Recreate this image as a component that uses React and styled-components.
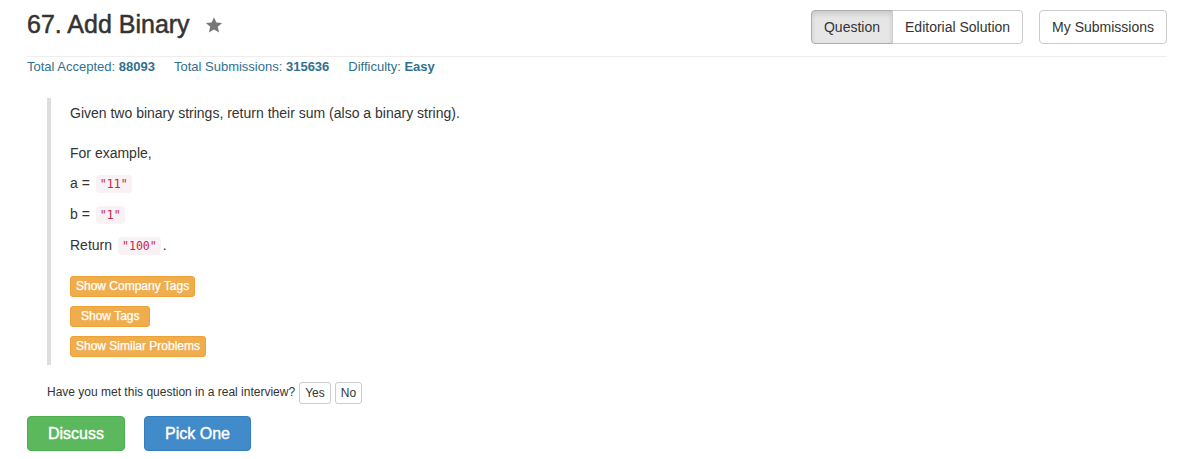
import styled, { createGlobalStyle, css } from "styled-components";

const GlobalStyle = createGlobalStyle`
  body {
    margin: 0;
    background: #fff;
    font-family: "Liberation Sans", Arial, Helvetica, sans-serif;
    color: #333;
    font-size: 14px;
    line-height: 1.42857;
  }
  * { box-sizing: border-box; }
`;

const Page = styled.div`
  width: 1140px;
  margin-left: 27px;
`;

const Header = styled.header`
  display: flex;
  justify-content: space-between;
  align-items: flex-start;
  padding-top: 10px;
  height: 57px;
  border-bottom: 1px solid #eee;
`;

const Title = styled.h3`
  display: flex;
  align-items: center;
  gap: 15px;
  margin: 0;
  font-size: 25px;
  font-weight: 400;
  line-height: 28px;
  color: #333;
  -webkit-text-stroke: 0.5px #333;
`;

const Star = styled.svg`
  width: 18px;
  height: 18px;
  fill: #777;
  margin-top: 1px;
`;

const Toolbar = styled.div`
  display: flex;
  gap: 16px;
`;

const Group = styled.div`
  display: flex;
`;

const NavButton = styled.button`
  font-family: inherit;
  font-size: 14px;
  line-height: 20px;
  padding: 6px 12px;
  color: #333;
  background: ${(p) => (p.$active ? "#e6e6e6" : "#fff")};
  border: 1px solid ${(p) => (p.$active ? "#adadad" : "#ccc")};
  box-shadow: ${(p) => (p.$active ? "inset 0 3px 5px rgba(0,0,0,.125)" : "none")};
  border-radius: 4px;
  cursor: pointer;
  ${(p) =>
    p.$first &&
    css`
      border-top-right-radius: 0;
      border-bottom-right-radius: 0;
    `}
  ${(p) =>
    p.$last &&
    css`
      border-top-left-radius: 0;
      border-bottom-left-radius: 0;
      margin-left: -1px;
    `}
`;

const Stats = styled.div`
  display: flex;
  gap: 19px;
  padding-top: 1px;
  font-size: 13px;
  line-height: 18px;
  color: #31708f;
  b { font-weight: 700; }
`;

const Quote = styled.blockquote`
  margin: 22px 0 0 20px;
  padding: 5px 0 8px 19px;
  border-left: 4px solid #ddd;
`;

const Para = styled.p`
  margin: 0 0 ${(p) => p.$gap || 10}px;
  line-height: 20px;
`;

const Code = styled.code`
  font-family: "DejaVu Sans Mono", "Liberation Mono", monospace;
  font-size: 11.6px;
  padding: 2px 4px;
  color: #c7254e;
  background: #f9f2f4;
  border-radius: 4px;
  margin: 0 2px;
`;

const Tags = styled.div`
  display: flex;
  flex-direction: column;
  align-items: flex-start;
  gap: 9px;
  margin-top: 20px;
`;

const TagButton = styled.button`
  font-family: inherit;
  font-size: 12px;
  line-height: 19px;
  padding: 0 ${(p) => p.$pad || 5}px;
  color: #fff;
  background: #f0ad4e;
  border: 1px solid #eea236;
  border-radius: 3px;
  -webkit-text-stroke: 0.25px #fff;
  cursor: pointer;
`;

const Interview = styled.div`
  display: flex;
  align-items: center;
  gap: 4px;
  margin: 17px 0 0 20px;
  font-size: 12px;
`;

const SmallButton = styled.button`
  font-family: inherit;
  font-size: 12px;
  line-height: 18px;
  padding: 1px 5px;
  color: #333;
  background: #fff;
  border: 1px solid #ccc;
  border-radius: 3px;
  cursor: pointer;
`;

const Actions = styled.div`
  display: flex;
  gap: 19px;
  margin-top: 12px;
`;

const BigButton = styled.button`
  font-family: inherit;
  font-size: 16px;
  height: 35px;
  padding: 0 20px;
  color: #fff;
  background: ${(p) => p.$bg};
  border: 1px solid ${(p) => p.$border};
  border-radius: 4px;
  -webkit-text-stroke: 0.4px #fff;
  cursor: pointer;
`;

export default function App() {
  return (
    <>
      <GlobalStyle />
      <Page>
        <Header>
          <Title>
            67. Add Binary
            <Star viewBox="0 0 24 24">
              <path d="M12 1.5l3.1 7.2 7.8.6-5.9 5.1 1.8 7.6L12 17.9 5.2 22l1.8-7.6-5.9-5.1 7.8-.6z" />
            </Star>
          </Title>
          <Toolbar>
            <Group>
              <NavButton $active $first>Question</NavButton>
              <NavButton $last>Editorial Solution</NavButton>
            </Group>
            <NavButton>My Submissions</NavButton>
          </Toolbar>
        </Header>
        <Stats>
          <span>Total Accepted: <b>88093</b></span>
          <span>Total Submissions: <b>315636</b></span>
          <span>Difficulty: <b>Easy</b></span>
        </Stats>
        <Quote>
          <Para $gap={20}>Given two binary strings, return their sum (also a binary string).</Para>
          <Para>For example,</Para>
          <Para>a = <Code>"11"</Code></Para>
          <Para>b = <Code>"1"</Code></Para>
          <Para $gap={0}>Return <Code>"100"</Code>.</Para>
          <Tags>
            <TagButton>Show Company Tags</TagButton>
            <TagButton $pad={10}>Show Tags</TagButton>
            <TagButton>Show Similar Problems</TagButton>
          </Tags>
        </Quote>
        <Interview>
          <span>Have you met this question in a real interview?</span>
          <SmallButton>Yes</SmallButton>
          <SmallButton>No</SmallButton>
        </Interview>
        <Actions>
          <BigButton $bg="#5cb85c" $border="#4cae4c">Discuss</BigButton>
          <BigButton $bg="#428bca" $border="#357ebd">Pick One</BigButton>
        </Actions>
      </Page>
    </>
  );
}
